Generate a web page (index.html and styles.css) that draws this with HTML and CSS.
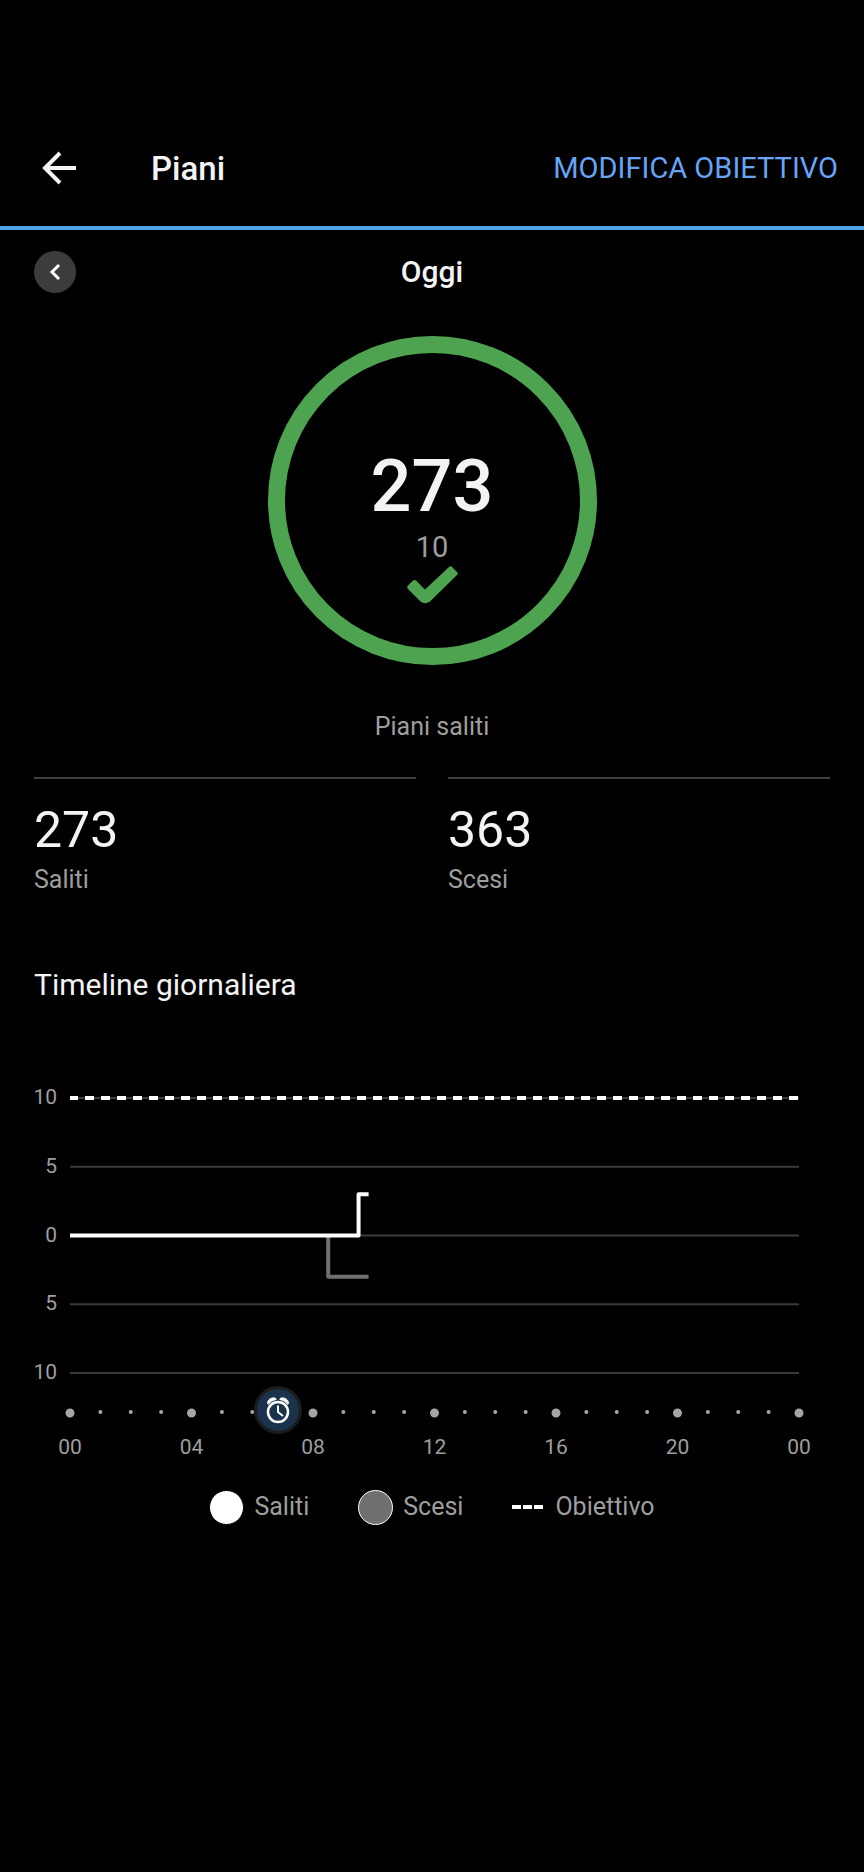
FILE: index.html
```html
<!DOCTYPE html>
<html lang="it">
<head>
<meta charset="utf-8">
<meta name="viewport" content="width=device-width, initial-scale=1">
<title>Piani</title>
<link rel="stylesheet" href="styles.css">
</head>
<body>
<header class="app-bar">
  <button class="back" type="button" aria-label="Indietro">
    <svg width="34" height="34" viewBox="0 0 34 34" fill="none" stroke="currentColor" stroke-width="4"><path d="M18 2 3 17l15 15M3 17h31"/></svg>
  </button>
  <h1 class="title">Piani</h1>
  <button class="edit-goal" type="button">MODIFICA OBIETTIVO</button>
</header>

<main class="content">
  <div class="day-nav">
    <button class="prev-day" type="button" aria-label="Giorno precedente">
      <svg width="12" height="18" viewBox="0 0 12 18" fill="none" stroke="currentColor" stroke-width="3"><path d="M10 2 3 9l7 7"/></svg>
    </button>
    <h2 class="day">Oggi</h2>
  </div>

  <section class="summary">
    <div class="ring">
      <strong class="ring-value">273</strong>
      <span class="ring-goal">10</span>
      <svg class="check" width="51" height="38" viewBox="0 0 51 38"><path d="M1 19.500 6 14.500Q7.500 13.500 9 14.500L18 23.500 42 1Q43.500-.5 45 1L50 6Q51.500 7.500 50 9L23 35.500Q18 39 13.500 35.500L1 23Q-.5 21 1 19.500Z" fill="currentColor"/></svg>
    </div>
    <p class="caption">Piani saliti</p>
  </section>

  <section class="stats">
    <div class="stat"><span class="stat-value">273</span><span class="caption">Saliti</span></div>
    <div class="stat"><span class="stat-value">363</span><span class="caption">Scesi</span></div>
  </section>

  <section>
    <h2 class="section-title">Timeline giornaliera</h2>
    <div class="chart">
      <div class="y-axis"><span>10</span><span>5</span><span>0</span><span>5</span><span>10</span></div>
      <svg class="plot" viewBox="0 0 24 20" preserveAspectRatio="none">
        <path class="grid-line" d="M0 0H24M0 5H24M0 10H24M0 15H24M0 20H24"/>
        <path class="goal-line" d="M0 0H24"/>
        <path class="series down" d="M8.500 10V13H9.830"/>
        <path class="series up" d="M0 10H9.500V7H9.830"/>
      </svg>
      <div class="hours">
        <div class="ticks">
          <svg class="tick-dots" viewBox="0 0 24 48" preserveAspectRatio="none">
            <path class="dot-large" d="M0 27h0M4 27h0M8 27h0M12 27h0M16 27h0M20 27h0M24 27h0"/>
            <path class="dot-small" d="M1 26h0M2 26h0M3 26h0M5 26h0M6 26h0M7 26h0M9 26h0M10 26h0M11 26h0M13 26h0M14 26h0M15 26h0M17 26h0M18 26h0M19 26h0M21 26h0M22 26h0M23 26h0"/>
          </svg>
          <span class="alarm">
            <svg width="24" height="28" viewBox="0 0 24 28" fill="none" stroke="currentColor"><circle cx="12" cy="16" r="10" stroke-width="2.500"/><path d="M12 9.500V16l5 4" stroke-width="2"/><path d="M1.500 7.500C1.500 3.500 5.500 1 9.500 2.200L10.200 3.500C6.500 4.200 4.500 5.500 2.500 8.300ZM22.500 7.500C22.500 3.500 18.500 1 14.500 2.200L13.800 3.500C17.500 4.200 19.500 5.500 21.500 8.300Z" fill="currentColor"/></svg>
          </span>
        </div>
        <div class="x-axis"><span>00</span><span>04</span><span>08</span><span>12</span><span>16</span><span>20</span><span>00</span></div>
      </div>
    </div>
    <ul class="legend">
      <li><i class="swatch swatch-up"></i>Saliti</li>
      <li><i class="swatch swatch-down"></i>Scesi</li>
      <li><i class="swatch-goal"><b></b><b></b><b></b></i>Obiettivo</li>
    </ul>
  </section>
</main>
</body>
</html>
```
FILE: styles.css
```css
* {
  box-sizing: border-box;
}

body {
  margin: 0;
  background: #000;
  color: #f3f3f3;
  font-family: Roboto, "Liberation Sans", sans-serif;
}

h1, h2, p, ul {
  margin: 0;
  padding: 0;
}

h1, h2 {
  font-weight: 500;
}

button {
  padding: 0;
  border: 0;
  background: none;
  color: inherit;
  font: inherit;
  cursor: pointer;
}

svg {
  display: block;
}

.app-bar {
  display: flex;
  align-items: center;
  height: 230px;
  padding: 110px 26px 0 42px;
  border-bottom: 4px solid #4fa3e8;
}

.title {
  margin-left: 75px;
  padding-top: 2px;
  font-size: 33px;
  line-height: 40px;
}

.edit-goal {
  margin-left: auto;
  color: #67a4f5;
  font-size: 29px;
  line-height: 36px;
}

.content {
  padding: 21px 34px 0;
}

.day-nav {
  display: grid;
  grid-template-columns: 42px 1fr 42px;
  align-items: center;
}

.prev-day {
  display: grid;
  place-items: center;
  width: 42px;
  height: 42px;
  border-radius: 50%;
  background: #3c3c3c;
  color: #fff;
}

.day {
  font-size: 30px;
  line-height: 36px;
  text-align: center;
}

.summary {
  display: flex;
  flex-direction: column;
  align-items: center;
  padding-top: 43px;
}

.ring {
  display: flex;
  flex-direction: column;
  align-items: center;
  width: 329px;
  height: 329px;
  margin-bottom: 46px;
  padding-top: 94px;
  border: 17px solid #4ea350;
  border-radius: 50%;
}

.ring-value {
  font-size: 72px;
  font-weight: 500;
  line-height: 80px;
}

.ring-goal {
  margin-top: 3px;
  color: #9e9e9e;
  font-size: 29px;
  line-height: 34px;
}

.check {
  margin-top: 2px;
  color: #4ea350;
}

.caption {
  color: #9e9e9e;
  font-size: 25px;
  line-height: 32px;
}

.stats {
  display: grid;
  grid-template-columns: 1fr 1fr;
  gap: 32px;
  margin-top: 34px;
}

.stat {
  display: flex;
  flex-direction: column;
  gap: 4px;
  padding-top: 21px;
  border-top: 2px solid #3f3f3f;
}

.stat-value {
  font-size: 50px;
  line-height: 60px;
}

.section-title {
  margin-top: 71px;
  font-size: 30px;
  font-weight: 400;
  line-height: 36px;
}

.chart {
  display: grid;
  grid-template-columns: 24px 1fr;
  column-gap: 12px;
  margin-top: 95px;
  padding-right: 31px;
  color: #9e9e9e;
  font-size: 21px;
  line-height: 24px;
}

.y-axis {
  display: flex;
  flex-direction: column;
  justify-content: space-between;
  margin: -13px 1px -11px -1px;
  text-align: right;
}

.plot {
  width: 100%;
  height: 275px;
  overflow: visible;
  fill: none;
}

.plot path,
.tick-dots path {
  vector-effect: non-scaling-stroke;
}

.grid-line {
  stroke: #3a3a3a;
  stroke-width: 2;
}

.goal-line {
  stroke: #fff;
  stroke-width: 4;
  stroke-dasharray: 9 7;
  stroke-dashoffset: 1;
}

.series {
  stroke-width: 4;
  stroke-linejoin: round;
}

.up {
  stroke: #fff;
}

.down {
  stroke: #707070;
}

.hours {
  grid-column: 2;
}

.ticks {
  position: relative;
  margin-top: 13px;
}

.tick-dots {
  width: 100%;
  height: 48px;
  overflow: visible;
  stroke: #a6a6a6;
  stroke-linecap: round;
}

.dot-large {
  stroke-width: 9;
}

.dot-small {
  stroke-width: 4;
}

.alarm {
  position: absolute;
  top: 0;
  left: calc(28.5% - 24px);
  display: grid;
  place-items: center;
  width: 48px;
  height: 48px;
  border: 3px solid #1c1c1c;
  border-radius: 50%;
  background: #1a324b;
  color: #fff;
}

.x-axis {
  display: flex;
  justify-content: space-between;
  margin-top: 1px;
}

.x-axis span {
  display: flex;
  justify-content: center;
  width: 0;
}

.legend {
  display: flex;
  justify-content: center;
  gap: 49px;
  margin-top: 30px;
  color: #9e9e9e;
  font-size: 25px;
  line-height: 36px;
  list-style: none;
}

.legend li {
  display: flex;
  align-items: center;
  gap: 10px;
}

.swatch {
  width: 35px;
  height: 35px;
  border: 1px solid #000;
  border-radius: 50%;
}

.swatch-up {
  background: #fff;
}

.swatch-down {
  border-color: #fff;
  background: #707070;
}

.swatch-goal {
  display: flex;
  gap: 2px;
  margin-right: 2px;
}

.swatch-goal b {
  width: 9px;
  height: 4px;
  background: #fff;
}
```
